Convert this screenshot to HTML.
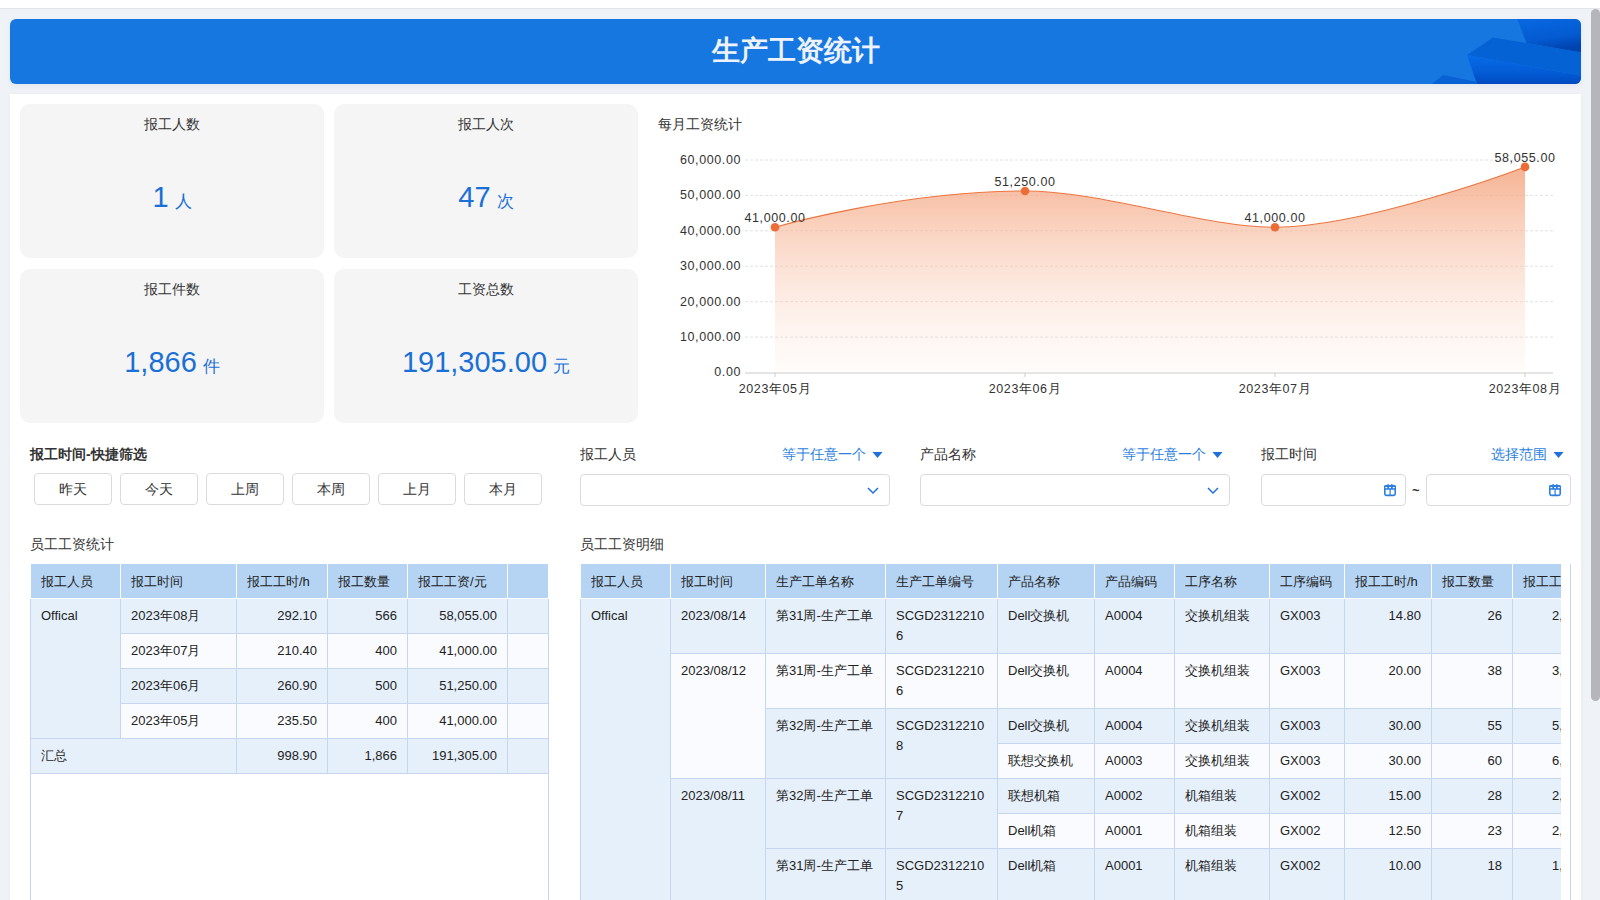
<!DOCTYPE html><html><head><meta charset='utf-8'><style>
*{box-sizing:border-box;margin:0;padding:0}
html,body{width:1600px;height:900px;overflow:hidden;background:#eff2f7;font-family:"Liberation Sans", sans-serif;color:#333}
.abs{position:absolute}
#topw{left:0;top:0;width:1600px;height:8px;background:#fff;border-bottom:1px solid #e2e5ea;height:9px}
#sb{left:1591px;top:9px;width:9px;height:692px;background:#b4b6bb;border-radius:5px}
#hdr{left:10px;top:19px;width:1571px;height:65px;border-radius:6px;background:#1677e0;overflow:hidden;box-shadow:0 2px 6px rgba(0,0,0,0.05)}
#hdr .t{position:absolute;left:0;top:0;width:100%;height:65px;line-height:63px;text-align:center;color:#eef3fb;font-size:28px;font-weight:bold;letter-spacing:0px}
#panel{left:10px;top:94px;width:1571px;height:820px;background:#fff;box-shadow:0 0 4px rgba(0,0,0,0.04)}
.card{position:absolute;width:304px;height:154px;background:#f5f5f6;border-radius:10px}
.card .ct{position:absolute;left:0;top:12px;width:100%;text-align:center;font-size:14px;line-height:16px;color:#333}
.card .cv{position:absolute;left:0;top:73px;width:100%;text-align:center;color:#1a70d7;font-size:29px;line-height:40px;white-space:nowrap}
.card .cv span{font-size:17px;margin-left:6px}
.lbl{font-size:14px;line-height:16px;color:#333;white-space:nowrap}
.btn{position:absolute;top:473px;width:78px;height:32px;border:1px solid #dadbdf;border-radius:4px;background:#fff;font-size:14px;line-height:30px;text-align:center;color:#333}
.sel{position:absolute;top:474px;height:32px;border:1px solid #dadbdf;border-radius:4px;background:#fff}
.blue{color:#2b7fe0}
table{border-collapse:collapse;table-layout:fixed;font-size:13px;color:#222}
th{background:#b5d4f4;border:1px solid #fff;border-top:none;font-weight:normal;text-align:left;height:34px;padding:2px 0 0 10px;white-space:nowrap;overflow:hidden}
td{border:1px solid #c6d6ee;vertical-align:top;padding:7px 10px 7px 10px;line-height:20px;white-space:nowrap;overflow:hidden}
td.r{text-align:right}
td.lc{text-align:left;padding-left:39px}
.b1{background:#e6f0fb}
.b0{background:#f9fbfe}
</style></head><body>
<div id='topw' class='abs'></div>
<div id='sb' class='abs'></div>
<div id='hdr' class='abs'>
<svg width='1571' height='65' style='position:absolute;left:0;top:0'>
<defs>
<linearGradient id='ga' x1='0' y1='0' x2='0.3' y2='1'><stop offset='0' stop-color='#0868e2'/><stop offset='0.65' stop-color='#045bd2'/><stop offset='1' stop-color='#0044b2'/></linearGradient>
<linearGradient id='gc' x1='0' y1='0' x2='0' y2='1'><stop offset='0' stop-color='#086be6'/><stop offset='0.6' stop-color='#035cd6'/><stop offset='1' stop-color='#004ac0'/></linearGradient>
</defs>
<polygon points='1507.2,0 1516.5,24 1571,33.4 1571,0' fill='url(#ga)'/>
<polygon points='1457,36.1 1483,18.6 1516.5,24 1571,33.4 1571,56.6' fill='#0562d5'/>
<polygon points='1457,36.1 1571,56.6 1571,65 1467,65' fill='url(#gc)'/>
<polygon points='1421.7,65 1433.3,56 1467,63 1467.5,65' fill='#0862d4'/>
</svg>
<div class='t'>生产工资统计</div></div>
<div id='panel' class='abs'></div>
<div class='card' style='left:20px;top:104px'><div class='ct'>报工人数</div><div class='cv'>1<span>人</span></div></div>
<div class='card' style='left:334px;top:104px'><div class='ct'>报工人次</div><div class='cv'>47<span>次</span></div></div>
<div class='card' style='left:20px;top:269px'><div class='ct'>报工件数</div><div class='cv'>1,866<span>件</span></div></div>
<div class='card' style='left:334px;top:269px'><div class='ct'>工资总数</div><div class='cv'>191,305.00<span>元</span></div></div>
<div class='abs lbl' style='left:658px;top:116px'>每月工资统计</div>
<svg class='abs' style='left:0;top:0' width='1600' height='420'>
<defs><linearGradient id='fg' gradientUnits='userSpaceOnUse' x1='0' y1='166' x2='0' y2='372'>
<stop offset='0' stop-color='#f4a47e' stop-opacity='0.85'/><stop offset='1' stop-color='#fde8de' stop-opacity='0.15'/></linearGradient></defs>
<line x1='745' y1='160.0' x2='1553' y2='160.0' stroke='#e2e2e2' stroke-dasharray='3,2'/><line x1='745' y1='195.4' x2='1553' y2='195.4' stroke='#e2e2e2' stroke-dasharray='3,2'/><line x1='745' y1='230.8' x2='1553' y2='230.8' stroke='#e2e2e2' stroke-dasharray='3,2'/><line x1='745' y1='266.2' x2='1553' y2='266.2' stroke='#e2e2e2' stroke-dasharray='3,2'/><line x1='745' y1='301.7' x2='1553' y2='301.7' stroke='#e2e2e2' stroke-dasharray='3,2'/><line x1='745' y1='337.1' x2='1553' y2='337.1' stroke='#e2e2e2' stroke-dasharray='3,2'/>
<path d='M775.00,227.29 C775.00,227.29 900.00,190.99 1025.00,190.99 C1102.50,190.99 1202.30,227.29 1275.00,227.29 C1366.00,227.29 1525.00,166.89 1525.00,166.89 L1525,372.5 L775,372.5 Z' fill='url(#fg)'/>
<line x1='745' y1='373' x2='1553' y2='373' stroke='#ddd' stroke-width='1.5'/>
<path d='M775.00,227.29 C775.00,227.29 900.00,190.99 1025.00,190.99 C1102.50,190.99 1202.30,227.29 1275.00,227.29 C1366.00,227.29 1525.00,166.89 1525.00,166.89' fill='none' stroke='#ec7540' stroke-width='1.1'/>
<circle cx='775' cy='227.29' r='4.3' fill='#ee6d36'/><circle cx='1025' cy='190.99' r='4.3' fill='#ee6d36'/><circle cx='1275' cy='227.29' r='4.3' fill='#ee6d36'/><circle cx='1525' cy='166.89' r='4.3' fill='#ee6d36'/>
<g font-family='"Liberation Sans", sans-serif' font-size='12.5' fill='#333' letter-spacing='0.6'><text x='741' y='163.8' text-anchor='end'>60,000.00</text><text x='741' y='199.2' text-anchor='end'>50,000.00</text><text x='741' y='234.6' text-anchor='end'>40,000.00</text><text x='741' y='270.1' text-anchor='end'>30,000.00</text><text x='741' y='305.5' text-anchor='end'>20,000.00</text><text x='741' y='340.9' text-anchor='end'>10,000.00</text><text x='741' y='376.3' text-anchor='end'>0.00</text><line x1='775' y1='373' x2='775' y2='377' stroke='#ccc'/><text x='775' y='393' text-anchor='middle'>2023年05月</text><line x1='1025' y1='373' x2='1025' y2='377' stroke='#ccc'/><text x='1025' y='393' text-anchor='middle'>2023年06月</text><line x1='1275' y1='373' x2='1275' y2='377' stroke='#ccc'/><text x='1275' y='393' text-anchor='middle'>2023年07月</text><line x1='1525' y1='373' x2='1525' y2='377' stroke='#ccc'/><text x='1525' y='393' text-anchor='middle'>2023年08月</text><text x='775' y='222.3' text-anchor='middle'>41,000.00</text><text x='1025' y='186.0' text-anchor='middle'>51,250.00</text><text x='1275' y='222.3' text-anchor='middle'>41,000.00</text><text x='1525' y='161.9' text-anchor='middle'>58,055.00</text></g>
</svg>
<div class='abs lbl' style='left:30px;top:446px;font-weight:bold'>报工时间-快捷筛选</div>
<div class='btn' style='left:34px'>昨天</div>
<div class='btn' style='left:120px'>今天</div>
<div class='btn' style='left:206px'>上周</div>
<div class='btn' style='left:292px'>本周</div>
<div class='btn' style='left:378px'>上月</div>
<div class='btn' style='left:464px'>本月</div>
<div class='abs lbl' style='left:580px;top:446px'>报工人员</div>
<div class='abs lbl blue' style='left:782px;top:446px'>等于任意一个</div>
<svg class='abs' style='left:872px;top:452px' width='11' height='7'><polygon points='0.5,0 10.5,0 5.5,6' fill='#1f70d8'/></svg>
<div class='sel' style='left:580px;width:310px'><svg class='abs' style='right:10px;top:11.5px' width='12' height='8'><polyline points='1,1 6,6 11,1' fill='none' stroke='#1f70d8' stroke-width='1.5'/></svg></div>
<div class='abs lbl' style='left:920px;top:446px'>产品名称</div>
<div class='abs lbl blue' style='left:1122px;top:446px'>等于任意一个</div>
<svg class='abs' style='left:1212px;top:452px' width='11' height='7'><polygon points='0.5,0 10.5,0 5.5,6' fill='#1f70d8'/></svg>
<div class='sel' style='left:920px;width:310px'><svg class='abs' style='right:10px;top:11.5px' width='12' height='8'><polyline points='1,1 6,6 11,1' fill='none' stroke='#1f70d8' stroke-width='1.5'/></svg></div>
<div class='abs lbl' style='left:1261px;top:446px'>报工时间</div>
<div class='abs lbl blue' style='left:1491px;top:446px'>选择范围</div>
<svg class='abs' style='left:1553px;top:452px' width='11' height='7'><polygon points='0.5,0 10.5,0 5.5,6' fill='#1f70d8'/></svg>
<div class='sel' style='left:1261px;width:145px'><svg class='abs' style='right:8px;top:9px' width='14' height='13'><rect x='1.8' y='1.8' width='10.4' height='9.6' rx='1.6' fill='none' stroke='#2b7fe0' stroke-width='1.6'/><rect x='1.2' y='1.2' width='11.6' height='4.6' rx='1' fill='#2b7fe0'/><rect x='2.4' y='3' width='1.9' height='1.2' fill='#fff'/><rect x='6.1' y='3' width='1.9' height='1.2' fill='#fff'/><rect x='9.8' y='3' width='1.9' height='1.2' fill='#fff'/><rect x='4.5' y='0' width='1.3' height='2' fill='#2b7fe0'/><rect x='8.2' y='0' width='1.3' height='2' fill='#2b7fe0'/><line x1='7.1' y1='5' x2='7.1' y2='11' stroke='#2b7fe0' stroke-width='1.2'/></svg></div>
<div class='abs' style='left:1412px;top:483px;font-size:13px;font-weight:bold'>~</div>
<div class='sel' style='left:1426px;width:145px'><svg class='abs' style='right:8px;top:9px' width='14' height='13'><rect x='1.8' y='1.8' width='10.4' height='9.6' rx='1.6' fill='none' stroke='#2b7fe0' stroke-width='1.6'/><rect x='1.2' y='1.2' width='11.6' height='4.6' rx='1' fill='#2b7fe0'/><rect x='2.4' y='3' width='1.9' height='1.2' fill='#fff'/><rect x='6.1' y='3' width='1.9' height='1.2' fill='#fff'/><rect x='9.8' y='3' width='1.9' height='1.2' fill='#fff'/><rect x='4.5' y='0' width='1.3' height='2' fill='#2b7fe0'/><rect x='8.2' y='0' width='1.3' height='2' fill='#2b7fe0'/><line x1='7.1' y1='5' x2='7.1' y2='11' stroke='#2b7fe0' stroke-width='1.2'/></svg></div>
<div class='abs lbl' style='left:30px;top:536px'>员工工资统计</div>
<div class='abs lbl' style='left:580px;top:536px'>员工工资明细</div>
<div class='abs' style='left:30px;top:564px;width:519px;height:340px;border-left:1px solid #c6d6ee;border-right:1px solid #c6d6ee'></div>
<table class='abs' style='left:30px;top:564px;width:519px'><colgroup><col style='width:90px'><col style='width:116px'><col style='width:91px'><col style='width:80px'><col style='width:100px'><col style='width:41px'></colgroup><tr><th>报工人员</th><th>报工时间</th><th>报工工时/h</th><th>报工数量</th><th>报工工资/元</th><th></th></tr><tr><td rowspan='4' class='b1'>Offical</td><td class='b1'>2023年08月</td><td class='r b1'>292.10</td><td class='r b1'>566</td><td class='r b1'>58,055.00</td><td class='b1'></td></tr><tr><td class='b0'>2023年07月</td><td class='r b0'>210.40</td><td class='r b0'>400</td><td class='r b0'>41,000.00</td><td class='b0'></td></tr><tr><td class='b1'>2023年06月</td><td class='r b1'>260.90</td><td class='r b1'>500</td><td class='r b1'>51,250.00</td><td class='b1'></td></tr><tr><td class='b0'>2023年05月</td><td class='r b0'>235.50</td><td class='r b0'>400</td><td class='r b0'>41,000.00</td><td class='b0'></td></tr><tr><td colspan='2' class='b1'>汇总</td><td class='r b1'>998.90</td><td class='r b1'>1,866</td><td class='r b1'>191,305.00</td><td class='b1'></td></tr></table>
<div class='abs' style='left:580px;top:564px;width:991px;height:340px;border-left:1px solid #c6d6ee;border-right:1px solid #c6d6ee'></div>
<div class='abs' style='left:580px;top:564px;width:981px;height:340px;overflow:hidden'><table style='width:1022px'><colgroup><col style='width:90px'><col style='width:95px'><col style='width:120px'><col style='width:112px'><col style='width:97px'><col style='width:80px'><col style='width:95px'><col style='width:75px'><col style='width:87px'><col style='width:81px'><col style='width:90px'></colgroup><tr><th>报工人员</th><th>报工时间</th><th>生产工单名称</th><th>生产工单编号</th><th>产品名称</th><th>产品编码</th><th>工序名称</th><th>工序编码</th><th>报工工时/h</th><th>报工数量</th><th>报工工资/元</th></tr><tr><td rowspan='7' class='b1'>Offical</td><td class='b1'>2023/08/14</td><td class='b1'>第31周-生产工单</td><td class='b1'>SCGD2312210<br>6</td><td class='b1'>Dell交换机</td><td class='b1'>A0004</td><td class='b1'>交换机组装</td><td class='b1'>GX003</td><td class='r b1'>14.80</td><td class='r b1'>26</td><td class='lc b1'>2,</td></tr><tr><td rowspan='3' class='b0'>2023/08/12</td><td class='b0'>第31周-生产工单</td><td class='b0'>SCGD2312210<br>6</td><td class='b0'>Dell交换机</td><td class='b0'>A0004</td><td class='b0'>交换机组装</td><td class='b0'>GX003</td><td class='r b0'>20.00</td><td class='r b0'>38</td><td class='lc b0'>3,</td></tr><tr><td rowspan='2' class='b1'>第32周-生产工单</td><td rowspan='2' class='b1'>SCGD2312210<br>8</td><td class='b1'>Dell交换机</td><td class='b1'>A0004</td><td class='b1'>交换机组装</td><td class='b1'>GX003</td><td class='r b1'>30.00</td><td class='r b1'>55</td><td class='lc b1'>5,</td></tr><tr><td class='b0'>联想交换机</td><td class='b0'>A0003</td><td class='b0'>交换机组装</td><td class='b0'>GX003</td><td class='r b0'>30.00</td><td class='r b0'>60</td><td class='lc b0'>6,</td></tr><tr><td rowspan='3' class='b1'>2023/08/11</td><td rowspan='2' class='b1'>第32周-生产工单</td><td rowspan='2' class='b1'>SCGD2312210<br>7</td><td class='b1'>联想机箱</td><td class='b1'>A0002</td><td class='b1'>机箱组装</td><td class='b1'>GX002</td><td class='r b1'>15.00</td><td class='r b1'>28</td><td class='lc b1'>2,</td></tr><tr><td class='b0'>Dell机箱</td><td class='b0'>A0001</td><td class='b0'>机箱组装</td><td class='b0'>GX002</td><td class='r b0'>12.50</td><td class='r b0'>23</td><td class='lc b0'>2,</td></tr><tr><td class='b1'>第31周-生产工单</td><td class='b1'>SCGD2312210<br>5</td><td class='b1'>Dell机箱</td><td class='b1'>A0001</td><td class='b1'>机箱组装</td><td class='b1'>GX002</td><td class='r b1'>10.00</td><td class='r b1'>18</td><td class='lc b1'>1,</td></tr></table></div>
</body></html>
